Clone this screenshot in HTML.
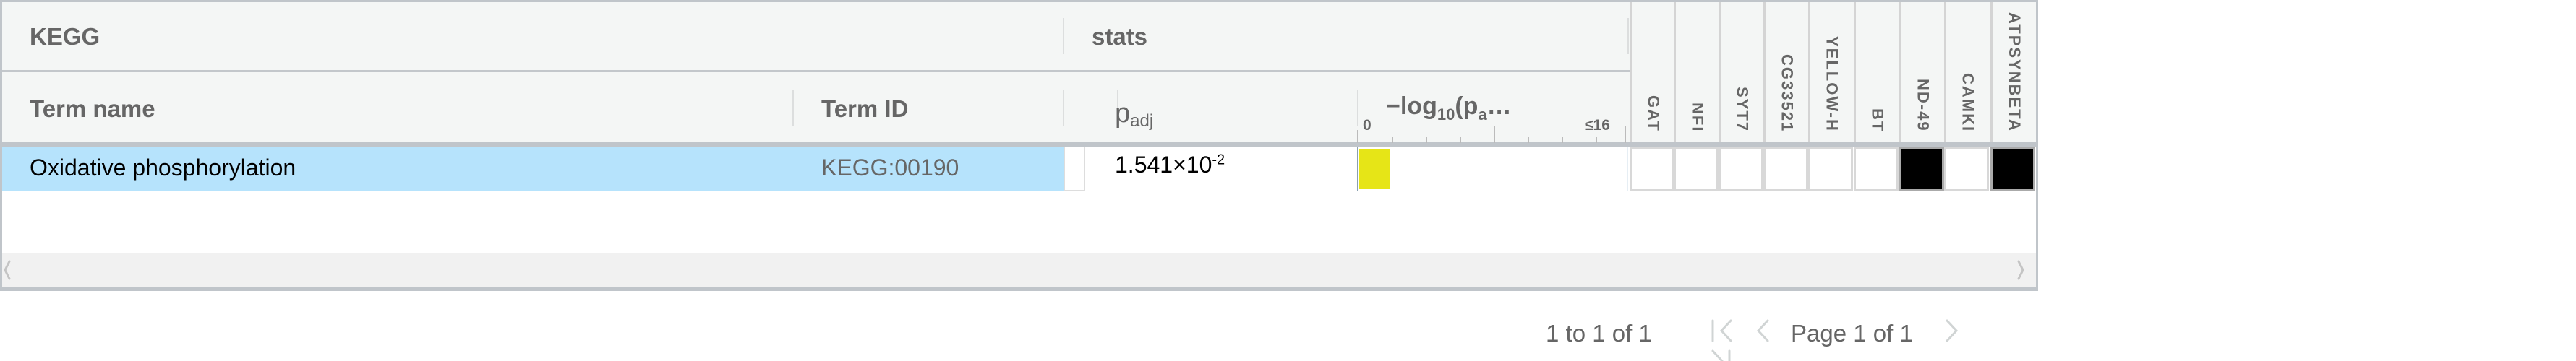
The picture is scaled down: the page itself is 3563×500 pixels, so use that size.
<!DOCTYPE html>
<html><head><meta charset="utf-8"><style>
*{margin:0;padding:0;box-sizing:border-box}
body{width:3563px;height:500px;background:#fff;position:relative;overflow:hidden;font-family:"Liberation Sans",sans-serif}
.a{position:absolute}
.h{color:#666;font-weight:bold}
.vd{position:absolute;width:2px;background:#dcdede}
.g{position:absolute;top:3px;width:62px;height:194px;border-left:3px solid #d4d4d4}
.gl{position:absolute;bottom:14px;left:50%;transform:translateX(-50%);writing-mode:vertical-rl;font-size:22px;font-weight:bold;color:#666;letter-spacing:2px;white-space:nowrap}
.c{position:absolute;top:203px;height:62px;width:62px;border:3px solid #d8d8d8;background:#fff}
.k{background:#000;border-color:#aaa}
.t{position:absolute;top:190px;width:2px;height:8px;background:#bbb}
</style></head><body>
<div class="a" style="left:0;top:0;width:2819px;height:403px;border:3px solid #c0c5ca;border-bottom:6px solid #c0c5ca;background:#fff"></div>
<div class="a" style="left:3px;top:3px;width:2813px;height:194px;background:#f4f6f5"></div>
<div class="a" style="left:3px;top:97px;width:2252px;height:3px;background:#c3c7cb"></div>
<div class="a" style="left:3px;top:197px;width:2813px;height:6px;background:#c0c5ca"></div>
<div class="vd" style="left:1470px;top:25px;height:50px"></div>
<div class="vd" style="left:2251px;top:25px;height:50px"></div>
<div class="vd" style="left:1096px;top:125px;height:50px"></div>
<div class="vd" style="left:1470px;top:125px;height:50px"></div>
<div class="vd" style="left:1545px;top:125px;height:50px"></div>
<div class="vd" style="left:1877px;top:125px;height:50px"></div>
<div class="a h" style="left:41px;top:32px;font-size:33px">KEGG</div>
<div class="a h" style="left:1510px;top:32px;font-size:33px">stats</div>
<div class="a h" style="left:41px;top:132px;font-size:33px">Term name</div>
<div class="a h" style="left:1136px;top:132px;font-size:33px">Term ID</div>
<div class="a" style="left:1542px;top:136px;font-size:38px;color:#666">p<span style="font-size:24px;position:relative;top:6px">adj</span></div>
<div class="a h" style="left:1917px;top:128px;font-size:34px">−log<sub style="font-size:22px">10</sub>(p<sub style="font-size:22px">a</sub>…</div>
<div class="a h" style="left:1885px;top:162px;font-size:21px">0</div>
<div class="a h" style="left:2192px;top:162px;font-size:21px">≤16</div>
<div class="t" style="left:1877px;top:180px;height:18px"></div>
<div class="t" style="left:1925px"></div><div class="t" style="left:1972px"></div><div class="t" style="left:2019px"></div>
<div class="t" style="left:2066px;top:175px;height:23px"></div>
<div class="t" style="left:2113px"></div><div class="t" style="left:2160px"></div><div class="t" style="left:2207px"></div>
<div class="t" style="left:2247px;top:175px;height:23px"></div>
<div class="g" style="left:2254px"><div class="gl">GAT</div></div>
<div class="g" style="left:2315px"><div class="gl">NFI</div></div>
<div class="g" style="left:2377px"><div class="gl">SYT7</div></div>
<div class="g" style="left:2439px"><div class="gl">CG33521</div></div>
<div class="g" style="left:2501px"><div class="gl">YELLOW-H</div></div>
<div class="g" style="left:2564px"><div class="gl">BT</div></div>
<div class="g" style="left:2627px"><div class="gl">ND-49</div></div>
<div class="g" style="left:2689px"><div class="gl">CAMKI</div></div>
<div class="g" style="left:2753px;width:63px"><div class="gl">ATPSYNBETA</div></div>
<div class="a" style="left:3px;top:203px;width:1468px;height:62px;background:#b6e3fc"></div>
<div class="a" style="left:1471px;top:203px;width:30px;height:62px;background:#fff;border:2px solid #ddd;border-top:0"></div>
<div class="a" style="left:41px;top:214px;font-size:32px;color:#000">Oxidative phosphorylation</div>
<div class="a" style="left:1136px;top:214px;font-size:32px;color:#666">KEGG:00190</div>
<div class="a" style="left:1542px;top:210px;font-size:32px;color:#000">1.541×10<sup style="font-size:20px">-2</sup></div>
<div class="a" style="left:1877px;top:203px;width:375px;height:62px;border:1px solid #e6eef4;border-left:2px solid #8aa0b0"></div>
<div class="a" style="left:1880px;top:207px;width:43px;height:55px;background:#e6e517"></div>
<div class="c" style="left:2254px"></div><div class="c" style="left:2315px"></div><div class="c" style="left:2377px"></div>
<div class="c" style="left:2439px"></div><div class="c" style="left:2501px"></div><div class="c" style="left:2564px"></div>
<div class="c k" style="left:2627px"></div><div class="c" style="left:2689px"></div><div class="c k" style="left:2753px"></div>
<div class="a" style="left:3px;top:350px;width:2813px;height:47px;background:#f1f1f1"></div>
<svg class="a" style="left:0;top:350px" width="3563" height="150" viewBox="0 350 3563 150" fill="none" stroke-linecap="round">
<path d="M13 362 L7 374 L13 386" stroke="#c4c4c4" stroke-width="3"/>
<path d="M2792 362 L2798 374 L2792 386" stroke="#c4c4c4" stroke-width="3"/>
<path d="M2369 444 L2369 472" stroke="#d0d4d4" stroke-width="3"/>
<path d="M2394 444 L2381 458 L2394 472" stroke="#d0d4d4" stroke-width="3"/>
<path d="M2445 444 L2432 458 L2445 472" stroke="#d0d4d4" stroke-width="3"/>
<path d="M2693 444 L2706 458 L2693 472" stroke="#d0d4d4" stroke-width="3"/>
<path d="M2369 486 L2382 500 M2392 486 L2392 500" stroke="#d0d4d4" stroke-width="3"/>
</svg>
<div class="a" style="left:2138px;top:443px;font-size:33px;color:#666">1 to 1 of 1</div>
<div class="a" style="left:2477px;top:443px;font-size:33px;color:#666">Page 1 of 1</div>
</body></html>
